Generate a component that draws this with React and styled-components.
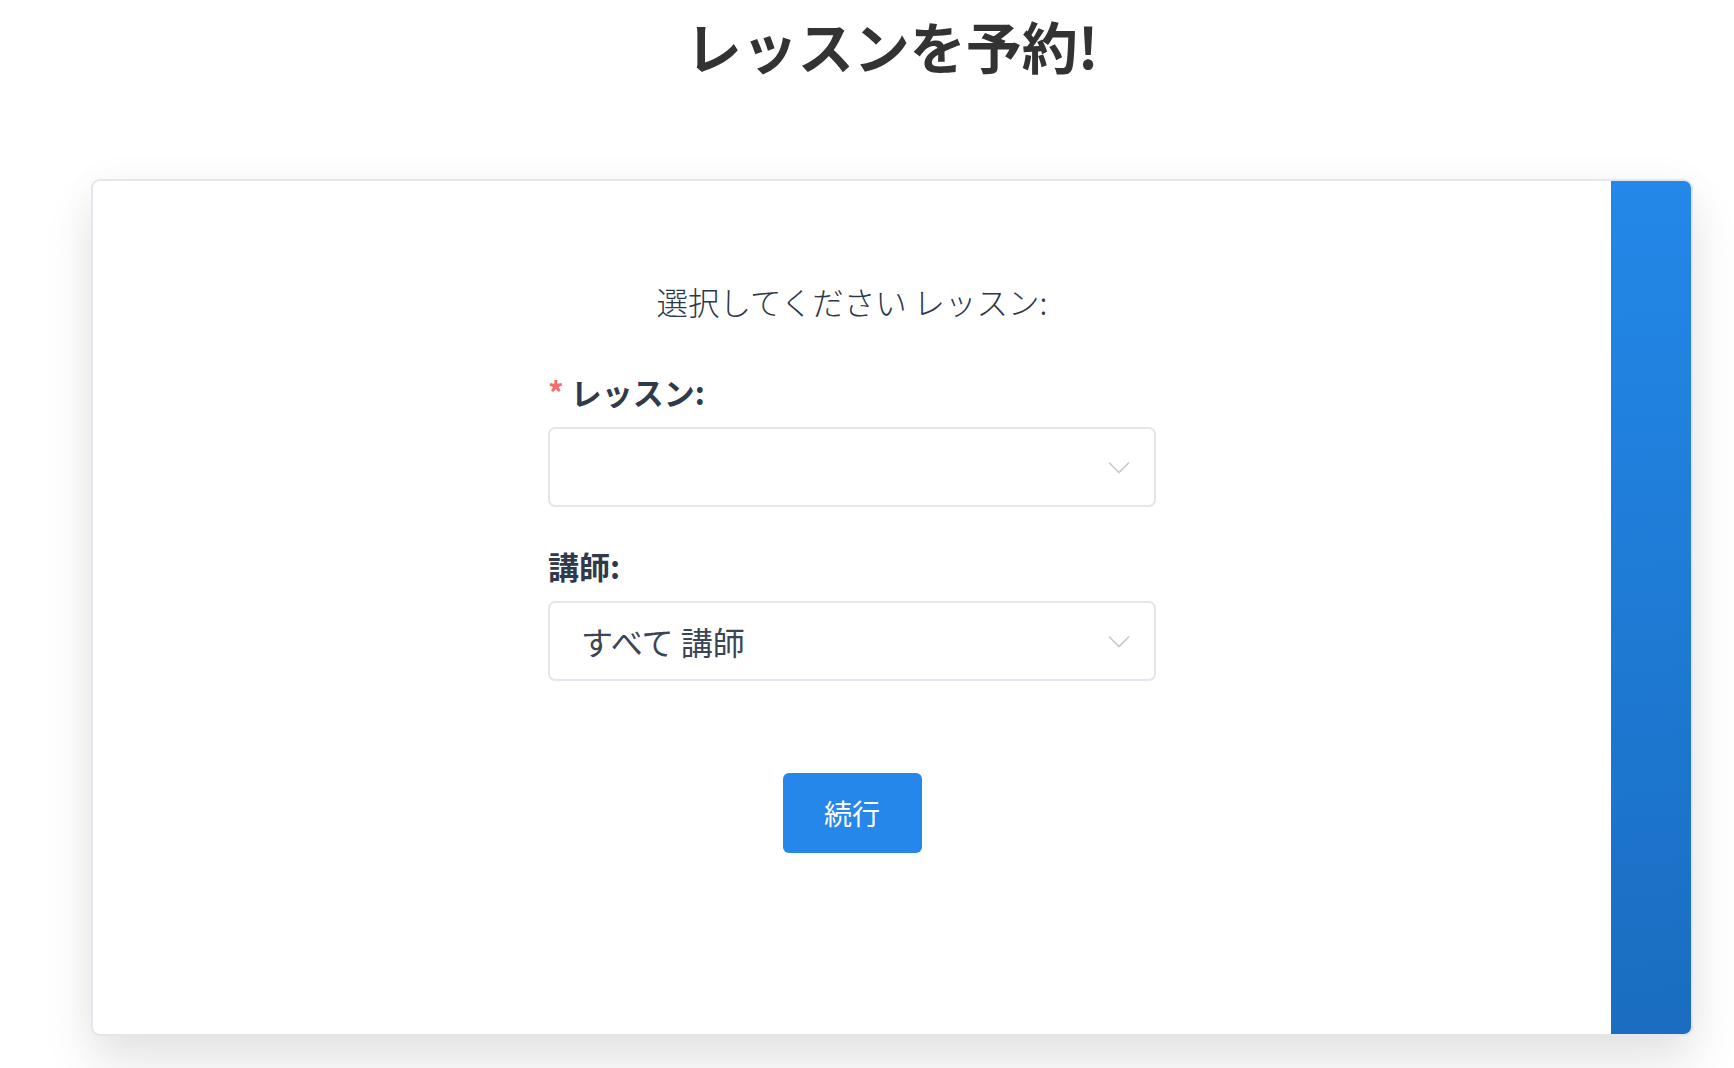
import styled, { createGlobalStyle } from 'styled-components';

const GlobalStyle = createGlobalStyle`
    body {
        margin: 0;
        background: #ffffff;
        font-family: "Noto Sans CJK JP", "Noto Sans", sans-serif;
    }
`;

// chevron for the select boxes
const Chevron = () => (
    <svg width="22" height="13" viewBox="0 0 22 13" fill="none">
        <path d="M1 1.5 L11 11.5 L21 1.5" stroke="#c4c8d0" strokeWidth="1.6" />
    </svg>
);

export default function App() {
    return (
        <Page>
            <GlobalStyle />
            <Title>レッスンを予約!</Title>
            <Card>
                <FormArea>
                    <Subtitle>選択してください レッスン:</Subtitle>
                    <Form>
                        <Label required>レッスン:</Label>
                        <Select>
                            <SelectValue></SelectValue>
                            <Chevron />
                        </Select>
                        <Label>講師:</Label>
                        <Select>
                            <SelectValue>すべて 講師</SelectValue>
                            <Chevron />
                        </Select>
                    </Form>
                    <Button>続行</Button>
                </FormArea>
                <SideBar />
            </Card>
        </Page>
    );
}

const Page = styled.div`
    width: 1602px;
    margin-left: 91px;
    padding-bottom: 40px;
`;

const Title = styled.h1`
    margin: 0;
    padding-top: 10px;
    line-height: 70px;
    font-size: 56px;
    font-weight: 700;
    color: #333333;
    text-align: center;
`;

const Card = styled.div`
    margin-top: 99px;
    height: 857px;
    display: flex;
    background: #ffffff;
    border: 2px solid #e3e6ec;
    border-radius: 9px;
    overflow: hidden;
    box-sizing: border-box;
    box-shadow: 0 28px 50px rgba(0, 0, 0, 0.1), 0 0 40px rgba(0, 0, 0, 0.03);
`;

const FormArea = styled.div`
    flex: 1;
    display: flex;
    flex-direction: column;
    align-items: center;
    padding-top: 100px;
`;

const Subtitle = styled.div`
    font-size: 31.5px;
    font-weight: 300;
    line-height: 40px;
    color: #2c3748;
`;

const Form = styled.div`
    width: 608px;
    margin-top: 51px;
    display: flex;
    flex-direction: column;
`;

const Label = styled.div`
    font-size: 31px;
    font-weight: 700;
    line-height: 40px;
    color: #2f3a4b;
    margin-bottom: 15px;

    &:not(:first-child) {
        margin-top: 39px;
    }

    &::before {
        content: ${p => (p.required ? '"*"' : 'none')};
        color: #f56c6c;
        font-weight: 700;
        margin-right: 7px;
    }
`;

const Select = styled.div`
    height: 80px;
    box-sizing: border-box;
    border: 2px solid #e2e6ee;
    border-radius: 7px;
    display: flex;
    align-items: center;
    justify-content: space-between;
    padding: 0 24px 0 31px;
`;

const SelectValue = styled.span`
    font-size: 32px;
    font-weight: 400;
    color: #3a4556;
`;

const Button = styled.button`
    margin-top: 92px;
    width: 139px;
    height: 80px;
    border: none;
    border-radius: 6px;
    background: #2487e9;
    color: #ffffff;
    font-family: inherit;
    font-size: 28px;
    font-weight: 400;
`;

const SideBar = styled.div`
    width: 80px;
    background: linear-gradient(175deg, #2388e9 0%, #1a6dc0 100%);
`;
